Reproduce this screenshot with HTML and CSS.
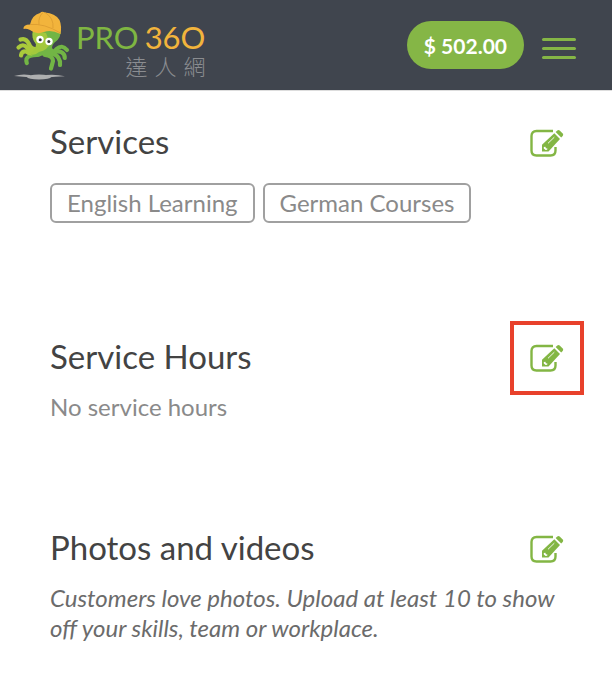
FILE: index.html
```html
<!DOCTYPE html>
<html lang="en">
<head>
    <meta charset="UTF-8">
    <meta name="viewport" content="width=device-width, initial-scale=1.0">
    <title>PRO360</title>
    <link rel="stylesheet" href="styles.css">
</head>
<body>
    <!-- shared icons -->
    <svg class="icon-defs" width="0" height="0" aria-hidden="true">
        <symbol id="icon-edit" viewBox="0 0 34 34">
            <path d="M23 5H6.500Q1.500 5 1.500 10V24.500Q1.500 29.500 6.500 29.500H20.500Q25.500 29.500 25.500 24.500V21" fill="none" stroke="#83b644" stroke-width="2.400"/>
            <path d="M12 25.500V18.800L24.300 7.300L30 13L18.500 25.500Z" fill="#83b644"/>
            <path d="M25.600 6L27.300 4.400Q28.500 3.400 29.700 4.500L32.700 7.500Q33.800 8.700 32.700 9.900L31.200 11.500Z" fill="#83b644"/>
            <path d="M18 17.300L24.300 11.200" stroke="#fff" stroke-width="0.900"/>
            <path d="M13.800 21L15.400 20.800L15.900 22.200L17.400 22.500L17.200 23.800L15.600 24L13.800 22.600Z" fill="#fff"/>
        </symbol>
    </svg>

    <header>
        <a class="logo" href="#" aria-label="PRO360">
            <svg class="logo-mark" viewBox="0 0 60 72" aria-hidden="true">
                <!-- shadow -->
                <g fill="#aeafb0">
                    <ellipse cx="27" cy="68" rx="12" ry="2.600"/>
                    <path d="M2 67Q10 64.500 18 66L20 68.500Q11 67.500 2 67Z"/>
                    <path d="M34 66Q44 65 53 67.300Q43 67.500 35 68.500Z"/>
                </g>
                <!-- right half -->
                <g fill="none" stroke="#72b545" stroke-width="4.200" stroke-linecap="round">
                    <path d="M36 43Q42 44 44.500 40Q50 35 55 41"/>
                    <path d="M38 44Q46 41 50 43.500Q53 45.500 52.700 49"/>
                    <path d="M36 45Q44 44 46.500 49Q48.500 52 48 56"/>
                    <path d="M33 46Q41 47 41 52Q40 56 39 59.500"/>
                    <path d="M25 46Q16 46 14.500 50Q14 52 14.800 54"/>
                </g>
                <!-- left half -->
                <g fill="none" stroke="#a9c93b" stroke-width="4.200" stroke-linecap="round">
                    <path d="M25 40Q19 41 17 35Q14 28.500 8.500 30.500"/>
                    <path d="M23 42Q17 42 15 38.500Q11 34 6.500 38.500"/>
                    <path d="M24 44Q18 46 14 42.500Q9.500 42 9 46.500"/>
                </g>
                <path d="M21 22Q19 29 24 35Q25 42 19 45.500Q23 50 30 46.500L38 48Q43 45 42 41Q38 39 42 34Q50 29 48.500 20Z" fill="#72b545"/>
                <path d="M21 22Q19 29 24 35Q24 42 17 44.500Q22 47.500 27 43Q36 41 38 34L34 24Z" fill="#a3c83c"/>
                <circle cx="28" cy="30.500" r="3.700" fill="#fff"/>
                <circle cx="37" cy="32.500" r="3.700" fill="#fff"/>
                <circle cx="28.200" cy="30.800" r="1.500" fill="#333"/>
                <circle cx="36.800" cy="32.600" r="1.500" fill="#333"/>
                <!-- cap -->
                <path d="M18 15.500Q20 6 28 4Q30 2 33 3.500Q43 4 47.500 11Q50 17 48.500 25Q39 20.500 32 23Q24 26 18 21Q14 19 11.500 20Q11 15.500 18 15.500Z" fill="#f2b43c"/>
                <path d="M18 15.500Q32 14 48.500 24M27 15.500Q26 8 31 3.500M41 19Q42 9 33 3.500" fill="none" stroke="#d99a30" stroke-width="0.800"/>
            </svg>
            <span class="logo-text">
                <span class="logo-name"><span class="pro">PRO</span><span class="num">36O</span></span>
                <span class="logo-sub" lang="zh-Hant"><span>達</span><span>人</span><span>網</span></span>
            </span>
        </a>
        <div class="header-actions">
            <button class="balance" type="button">$ 502.00</button>
            <button class="menu" type="button" aria-label="Menu">
                <span></span>
                <span></span>
                <span></span>
            </button>
        </div>
    </header>

    <main>
        <section>
            <div class="section-title">
                <h2>Services</h2>
                <button class="edit" type="button" aria-label="Edit services"><svg><use href="#icon-edit"/></svg></button>
            </div>
            <ul class="tags">
                <li>English Learning</li>
                <li>German Courses</li>
            </ul>
        </section>

        <section>
            <div class="section-title">
                <h2>Service Hours</h2>
                <button class="edit highlight" type="button" aria-label="Edit service hours"><svg><use href="#icon-edit"/></svg></button>
            </div>
            <p>No service hours</p>
        </section>

        <section>
            <div class="section-title">
                <h2>Photos and videos</h2>
                <button class="edit" type="button" aria-label="Edit photos and videos"><svg><use href="#icon-edit"/></svg></button>
            </div>
            <p class="hint">Customers love photos. Upload at least 10 to show off your skills, team or workplace.</p>
        </section>
    </main>
</body>
</html>
```
FILE: styles.css
```css
* {
    box-sizing: border-box;
}

body {
    margin: 0;
    background-color: #fff;
    color: #434343;
    font-family: Lato, "Noto Sans CJK TC", sans-serif;
}

button {
    padding: 0;
    border: none;
    background: none;
    font-family: inherit;
    cursor: pointer;
}

.icon-defs {
    display: none;
}

header {
    display: flex;
    align-items: center;
    justify-content: space-between;
    height: 91px;
    padding: 0 36px 0 12px;
    background-color: #40454e;
    border-bottom: 1px solid #ddd;
}

.logo {
    display: flex;
    align-items: center;
    gap: 4px;
    text-decoration: none;
}

.logo-mark {
    width: 60px;
    height: 72px;
}

.logo-text {
    display: flex;
    flex-direction: column;
    padding-top: 8px;
}

.logo-name {
    display: flex;
    gap: 6px;
    font-size: 31px;
    line-height: 32px;
}

.pro {
    color: #7fb642;
}

.num {
    color: #f2b43c;
}

.logo-sub {
    display: flex;
    justify-content: flex-end;
    gap: 7px;
    color: #8b8d91;
    font-family: "Noto Sans CJK TC", sans-serif;
    font-size: 22px;
    font-weight: 300;
    line-height: 24px;
}

.header-actions {
    display: flex;
    align-items: center;
    gap: 18px;
}

.balance {
    height: 48px;
    padding: 0 17px;
    border-radius: 24px;
    background-color: #85b646;
    color: #fff;
    font-size: 21px;
    font-weight: bold;
}

.menu {
    display: flex;
    flex-direction: column;
    gap: 6px;
    padding-top: 6px;
}

.menu span {
    width: 34px;
    height: 3px;
    border-radius: 2px;
    background-color: #85b646;
}

main {
    padding: 32px 48px 32px 50px;
}

section {
    padding-bottom: 107px;
}

section:last-child {
    padding-bottom: 0;
}

.section-title {
    display: flex;
    align-items: center;
    justify-content: space-between;
    margin-bottom: 14px;
}

h2 {
    margin: 0;
    padding-bottom: 4px;
    font-size: 33px;
    font-weight: normal;
    line-height: 36px;
}

.edit {
    width: 34px;
    height: 34px;
}

.edit svg {
    display: block;
    width: 34px;
    height: 34px;
}

.highlight {
    outline: 4px solid #e8412b;
    outline-offset: 16px;
}

.tags {
    display: flex;
    flex-wrap: wrap;
    gap: 8px;
    margin: 0;
    padding: 6px 0 8px;
    list-style: none;
}

.tags li {
    padding: 0 15px;
    border: 2px solid #a0a0a0;
    border-radius: 6px;
    color: #8a8a8a;
    font-size: 24px;
    line-height: 36px;
}

p {
    margin: 0;
    color: #8a8a8a;
    font-size: 24px;
    line-height: 30px;
}

.hint {
    color: #6b6b6b;
    font-style: italic;
}
```
